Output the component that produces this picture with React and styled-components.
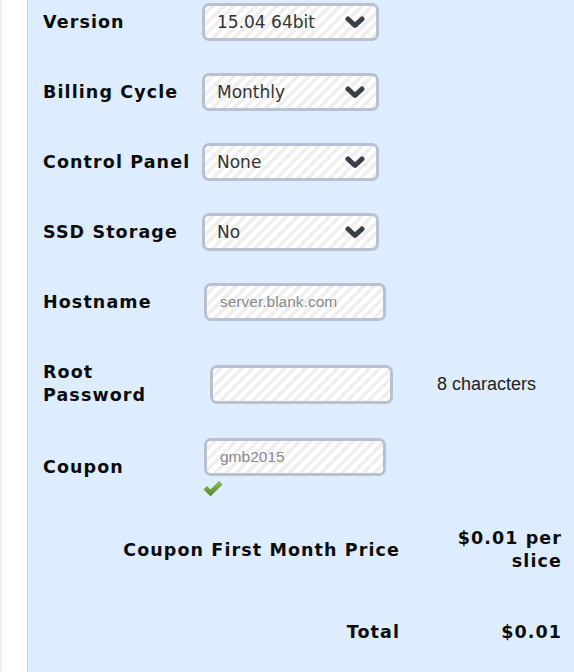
import React from "react";
import styled, { createGlobalStyle } from "styled-components";

const GlobalStyle = createGlobalStyle`
  html, body {
    margin: 0;
    padding: 0;
    background: #ffffff;
  }
  body {
    font-family: "DejaVu Sans", Verdana, sans-serif;
  }
`;

const Page = styled.div`
  display: flex;
  min-height: 100vh;
  overflow: hidden;
`;

const SideStrip = styled.div`
  width: 25px;
  flex-shrink: 0;
  background: #ffffff;
  border-left: 2px solid #e8f0fa;
  border-right: 1px solid #c9d7e8;
`;

const Main = styled.div`
  flex: 1;
  background: #deedfe;
`;

const Form = styled.div`
  margin-top: -13px;
  padding-left: 15px;
  display: flex;
  flex-direction: column;
`;

const Row = styled.div`
  display: grid;
  grid-template-columns: 159px 235px 125px;
  align-items: center;
  height: ${(p) => p.h || 70}px;
`;

const Label = styled.div`
  font-family: "DejaVu Sans", Verdana, sans-serif;
  font-weight: bold;
  font-size: 17.5px;
  letter-spacing: 1.1px;
  line-height: 23px;
  color: #0c0c0c;
`;

const SumLabel = styled(Label)`
  grid-column: 1 / span 2;
  text-align: right;
  padding-right: 37px;
`;

const SumValue = styled(Label)`
  text-align: right;
`;

const stripes = `repeating-linear-gradient(
    135deg,
    #ffffff 0 4px,
    #efefef 4px 7.5px
  )`;

const SelectBox = styled.div`
  box-sizing: border-box;
  width: 177px;
  height: 38px;
  border: 3px solid #b9c1d0;
  border-radius: 7px;
  background: ${stripes};
  display: flex;
  align-items: center;
  justify-content: space-between;
  padding: 0 11px 0 12px;
  font-family: "DejaVu Sans", Verdana, sans-serif;
  font-size: 17px;
  color: #333333;
`;

const TextBox = styled.div`
  box-sizing: border-box;
  width: ${(p) => p.w || 182}px;
  height: ${(p) => p.ht || 38}px;
  margin-left: ${(p) => p.ml || 0}px;
  border: 3px solid #b9c1d0;
  border-radius: 7px;
  background: ${stripes};
  display: flex;
  align-items: center;
  padding: 0 13px;
  font-family: "Liberation Sans", Arial, sans-serif;
  font-size: 15.5px;
  color: #8a8a8a;
`;

const FieldStack = styled.div`
  display: flex;
  flex-direction: column;
  gap: 5px;
`;

const Note = styled.div`
  font-family: "Liberation Sans", Arial, sans-serif;
  font-size: 18px;
  color: #222222;
`;

const Chevron = () => (
  <svg width="20" height="13" viewBox="0 0 20 13">
    <polyline
      points="3,3 10,9.5 17,3"
      fill="none"
      stroke="#3a3e46"
      strokeWidth="5"
      strokeLinecap="round"
      strokeLinejoin="round"
    />
  </svg>
);

const Check = () => (
  <svg width="20" height="16" viewBox="0 0 20 16" style={{ marginLeft: 1 }}>
    <defs>
      <linearGradient id="ok" x1="0" y1="0" x2="0" y2="1">
        <stop offset="0" stopColor="#8cc04a" />
        <stop offset="1" stopColor="#4f8a1f" />
      </linearGradient>
    </defs>
    <path
      d="M1 8.5 L4 5.5 L7.5 9 L16 0.5 L19 3.5 L7.5 15 Z"
      fill="url(#ok)"
      stroke="#4a7d1e"
      strokeWidth="0.6"
    />
  </svg>
);

const selects = [
  ["Version", "15.04 64bit"],
  ["Billing Cycle", "Monthly"],
  ["Control Panel", "None"],
  ["SSD Storage", "No"],
];

export default function App() {
  return (
    <>
      <GlobalStyle />
      <Page>
        <SideStrip />
        <Main>
          <Form>
            {selects.map(([label, value]) => (
              <Row key={label}>
                <Label>{label}</Label>
                <SelectBox>
                  <span>{value}</span>
                  <Chevron />
                </SelectBox>
              </Row>
            ))}
            <Row>
              <Label>Hostname</Label>
              <TextBox ml={2}>server.blank.com</TextBox>
            </Row>
            <Row h={94}>
              <Label>
                Root
                <br />
                Password
              </Label>
              <TextBox ml={8} w={183} ht={39} />
              <Note>8 characters</Note>
            </Row>
            <Row h={72}>
              <Label>Coupon</Label>
              <FieldStack>
                <TextBox ml={2}>gmb2015</TextBox>
                <Check />
              </FieldStack>
            </Row>
            <Row h={94}>
              <SumLabel>Coupon First Month Price</SumLabel>
              <SumValue>$0.01 per slice</SumValue>
            </Row>
            <Row>
              <SumLabel>Total</SumLabel>
              <SumValue>$0.01</SumValue>
            </Row>
          </Form>
        </Main>
      </Page>
    </>
  );
}
